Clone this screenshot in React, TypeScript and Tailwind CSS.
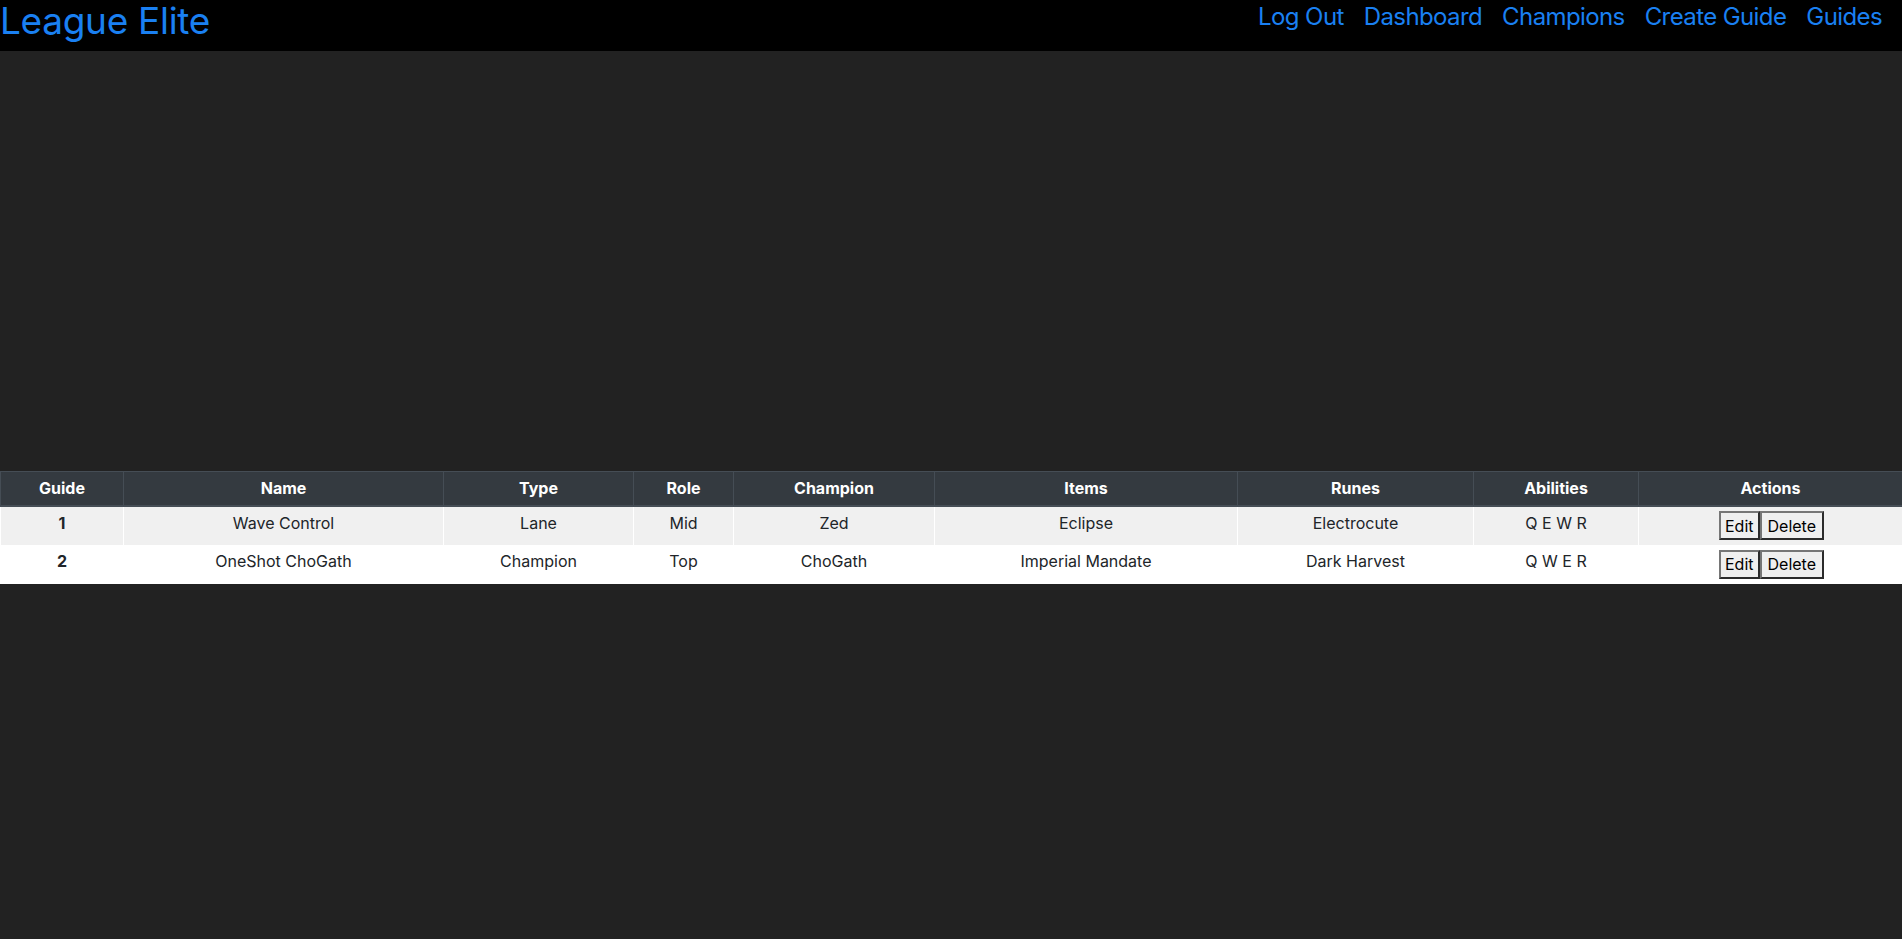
import React from 'react';

const guides = [
  { id: 1, name: 'Wave Control', type: 'Lane', role: 'Mid', champion: 'Zed', items: 'Eclipse', runes: 'Electrocute', abilities: 'Q E W R' },
  { id: 2, name: 'OneShot ChoGath', type: 'Champion', role: 'Top', champion: 'ChoGath', items: 'Imperial Mandate', runes: 'Dark Harvest', abilities: 'Q W E R' },
];

const columns = [
  { label: 'Guide', w: 'w-[123px]' },
  { label: 'Name', w: 'w-[320px]' },
  { label: 'Type', w: 'w-[190px]' },
  { label: 'Role', w: 'w-[100px]' },
  { label: 'Champion', w: 'w-[201px]' },
  { label: 'Items', w: 'w-[303px]' },
  { label: 'Runes', w: 'w-[236px]' },
  { label: 'Abilities', w: 'w-[165px]' },
  { label: 'Actions', w: 'w-[264px]' },
];

const App = () => {
  return (
    <div className="min-h-[939px] bg-[#222222] font-['Inter',sans-serif]">
      {/* Navbar */}
      <header className="h-[51px] bg-black flex items-start justify-between">
        <h1 className="text-[37px] leading-[42px] text-[#1a80f2] tracking-[-0.3px]">League Elite</h1>
        <nav className="flex gap-[20px] pr-[20px] pt-[2px]">
          {['Log Out', 'Dashboard', 'Champions', 'Create Guide', 'Guides'].map((l) => (
            <a key={l} href="#" className="text-[24px] leading-[30px] text-[#1a80f2] tracking-[-0.6px]">{l}</a>
          ))}
        </nav>
      </header>

      <main className="pt-[420px]">
        <table className="w-full table-fixed border-collapse text-center text-[16px]">
          <thead>
            <tr className="bg-[#343a40] text-white">
              {columns.map((c) => (
                <th key={c.label} className={`${c.w} h-[34px] border border-[#454d55] border-b-2 font-bold`}>{c.label}</th>
              ))}
            </tr>
          </thead>
          <tbody className="text-[#212529]">
            {guides.map((g, i) => (
              <tr key={g.id} className={i % 2 === 0 ? 'bg-[#f0f0f0]' : 'bg-white'}>
                <td className="h-[39px] border-x border-white font-bold pb-[6px]">{g.id}</td>
                <td className="border-x border-white pb-[6px]">{g.name}</td>
                <td className="border-x border-white pb-[6px]">{g.type}</td>
                <td className="border-x border-white pb-[6px]">{g.role}</td>
                <td className="border-x border-white pb-[6px]">{g.champion}</td>
                <td className="border-x border-white pb-[6px]">{g.items}</td>
                <td className="border-x border-white pb-[6px]">{g.runes}</td>
                <td className="border-x border-white pb-[6px]">{g.abilities}</td>
                <td className="border-x border-white">
                  <div className="flex justify-center pl-[2px]">
                    <button className="h-[29px] px-[4px] bg-[#efefef] border-2 border-t-[#767676] border-l-[#767676] border-r-[#2b2b2b] border-b-[#2b2b2b] text-[16px] text-black">Edit</button>
                    <button className="h-[29px] px-[6px] bg-[#efefef] border-2 border-t-[#767676] border-l-[#767676] border-r-[#2b2b2b] border-b-[#2b2b2b] text-[16px] text-black">Delete</button>
                  </div>
                </td>
              </tr>
            ))}
          </tbody>
        </table>
      </main>
    </div>
  );
};

export default App;
